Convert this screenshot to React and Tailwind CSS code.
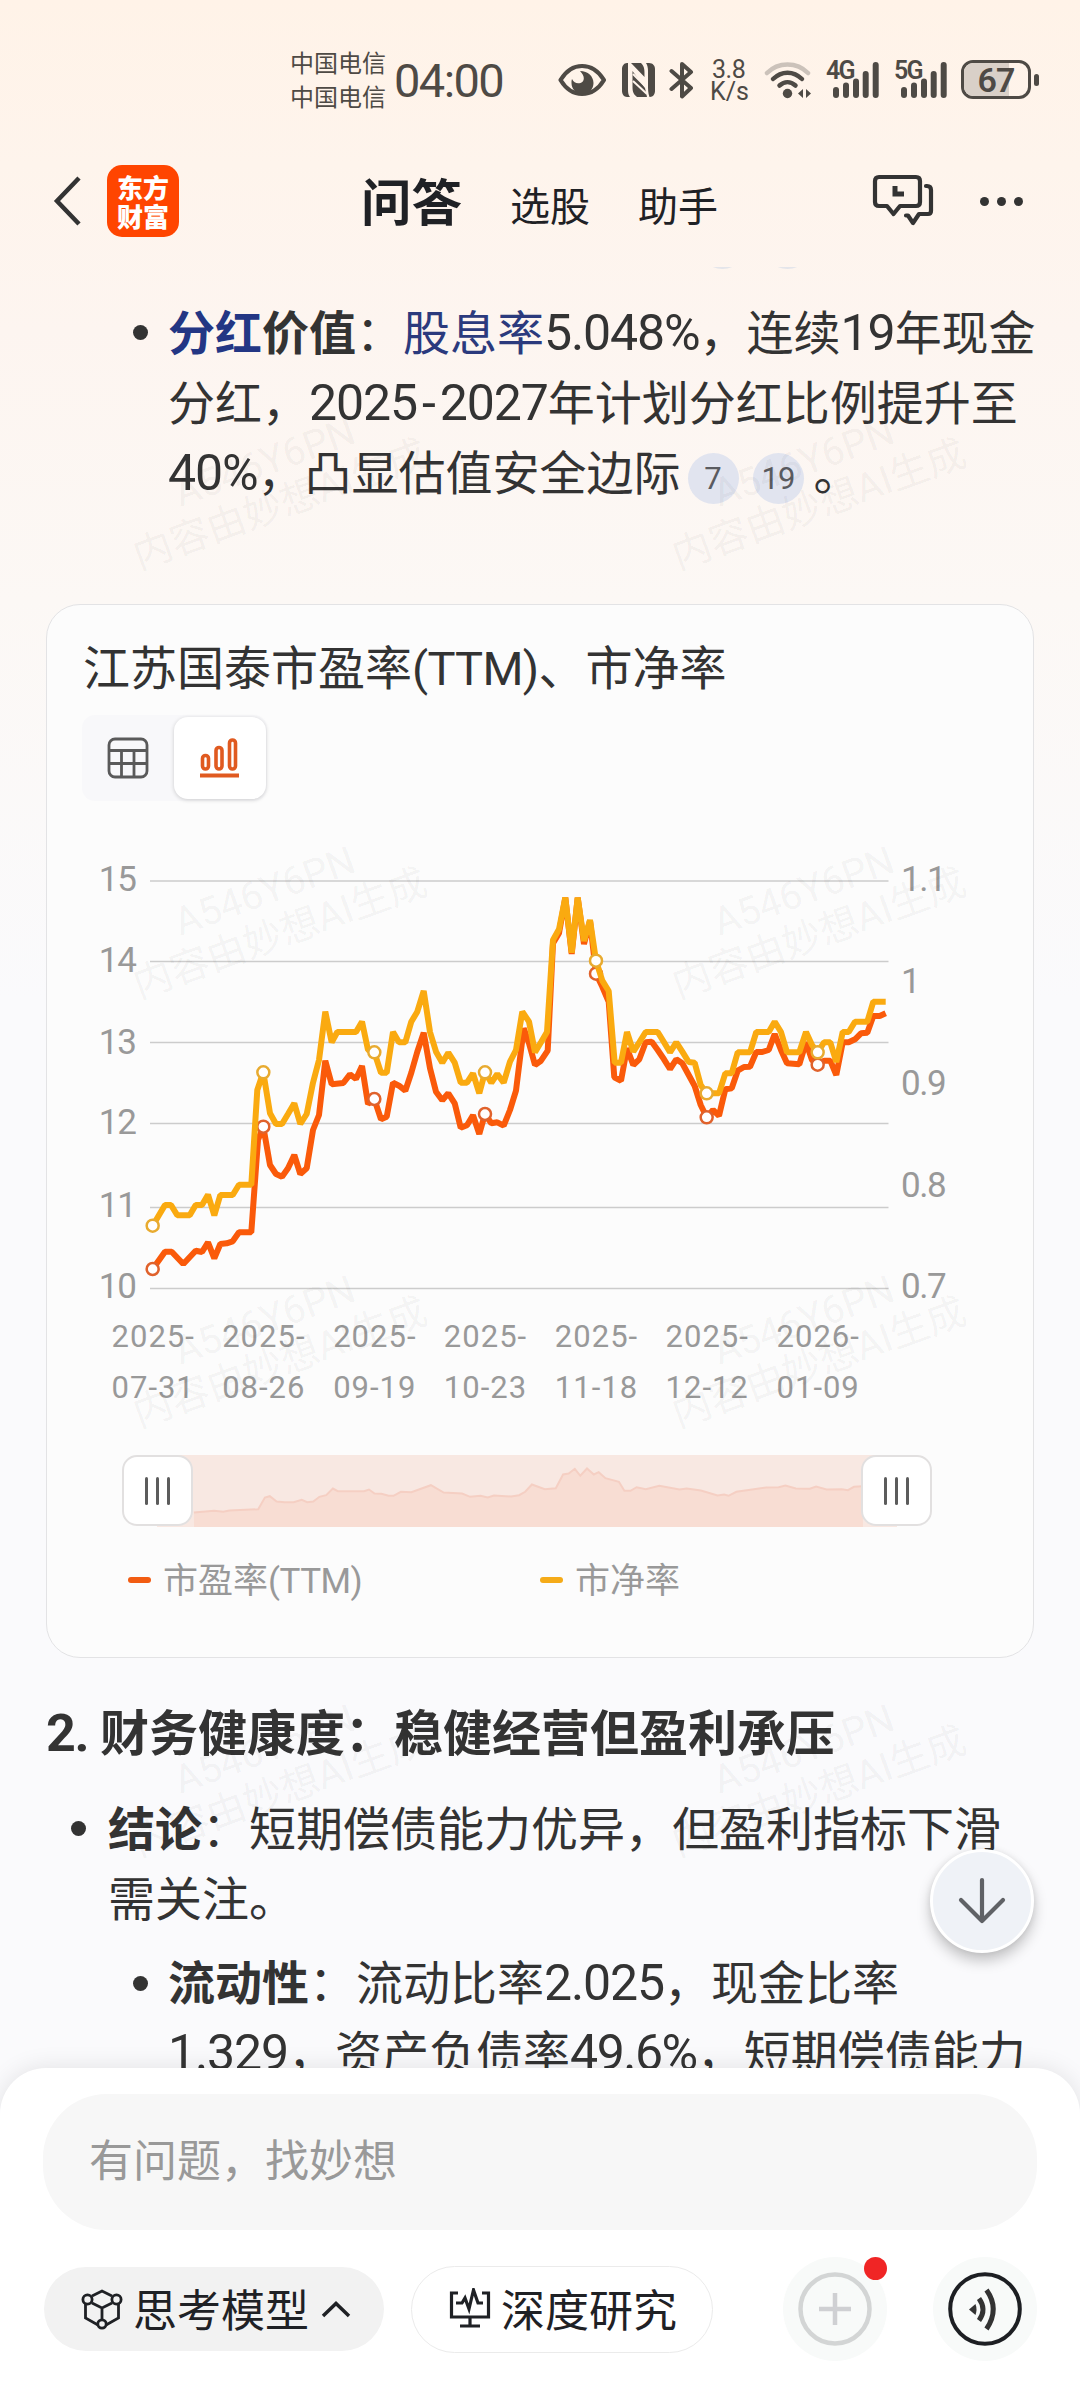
import React from "react";

const PE = [
  [218, 1317], [255, 1265], [275, 1265], [310, 1302], [347, 1262], [366, 1266], [384, 1237], [403, 1285], [421, 1242], [440, 1240], [458, 1234], [477, 1207], [514, 1207], [534, 930], [550, 890], [570, 1005], [588, 1032], [606, 1040], [624, 1015], [643, 975], [661, 1032], [680, 1015], [699, 900], [717, 855], [736, 692], [755, 763], [790, 759], [810, 733], [828, 747], [846, 708], [864, 822], [883, 807], [903, 868], [920, 860], [939, 758], [957, 767], [976, 782], [994, 728], [1012, 665], [1031, 608], [1050, 715], [1068, 785], [1087, 811], [1105, 790], [1124, 820], [1142, 893], [1161, 886], [1179, 856], [1198, 912], [1215, 852],
  [1234, 880], [1252, 877], [1271, 887], [1290, 840], [1308, 782], [1331, 595], [1347, 640], [1365, 705], [1383, 692], [1403, 662], [1419, 340], [1437, 310], [1456, 203], [1475, 372], [1493, 203], [1512, 342], [1530, 272], [1548, 431], [1567, 470], [1586, 515], [1603, 742], [1623, 752], [1641, 655], [1660, 705], [1678, 688], [1697, 637], [1715, 635], [1733, 660], [1752, 688], [1770, 717], [1789, 688], [1807, 700], [1826, 735], [1844, 768], [1862, 825], [1880, 862], [1899, 840], [1917, 857], [1936, 778], [1955, 775], [1973, 722], [1992, 711], [2010, 710], [2029, 666], [2047, 666], [2066, 660], [2084, 612], [2103, 660], [2121, 700], [2158, 703], [2178, 637], [2196, 690], [2213, 704], [2232, 692], [2251, 692], [2269, 735], [2288, 637], [2306, 637], [2325, 628], [2343, 610], [2362, 608], [2380, 558], [2399, 558], [2417, 550],
];

const PB = [
  [218, 1187], [255, 1125], [273, 1125], [292, 1156], [329, 1156], [347, 1125], [366, 1125], [384, 1094], [403, 1156], [421, 1095], [458, 1095], [477, 1064], [514, 1064], [532, 780], [550, 727], [570, 850], [588, 882], [606, 882], [624, 852], [643, 820], [661, 882], [680, 852], [699, 758], [717, 690], [736, 545], [755, 637], [772, 606], [828, 606], [846, 575], [864, 660], [883, 667], [903, 728], [920, 728], [939, 606], [957, 637], [976, 637], [994, 575], [1012, 545], [1031, 483], [1050, 606], [1068, 665], [1087, 698], [1105, 668], [1124, 698], [1142, 758], [1161, 758], [1179, 730], [1198, 790], [1215, 727],
  [1234, 758], [1252, 732], [1271, 758], [1290, 695], [1308, 660], [1327, 545], [1347, 575], [1365, 667], [1383, 637], [1401, 606], [1419, 330], [1437, 298], [1456, 203], [1475, 368], [1493, 203], [1512, 333], [1530, 270], [1548, 392], [1567, 452], [1586, 483], [1604, 698], [1623, 698], [1641, 606], [1660, 665], [1678, 637], [1697, 606], [1733, 606], [1752, 637], [1770, 667], [1789, 637], [1807, 665], [1826, 696], [1844, 698], [1862, 765], [1880, 790], [1917, 790], [1936, 730], [1955, 730], [1973, 667], [2010, 667], [2029, 606], [2066, 606], [2084, 575], [2103, 606], [2121, 667], [2158, 667], [2178, 606], [2196, 645], [2213, 667], [2232, 637], [2251, 637], [2269, 696], [2288, 606], [2306, 606], [2325, 575], [2362, 575], [2380, 515], [2417, 515],
];

const PREVIEW = [
  [217, 697], [250, 692], [265, 695], [275, 691], [322, 687], [333, 652], [341, 648], [352, 664], [365, 666], [380, 666], [393, 659], [402, 666], [412, 664], [422, 650], [433, 645], [444, 625], [452, 633], [495, 633], [503, 628], [512, 640], [523, 641], [535, 647], [543, 647], [555, 635], [572, 636], [604, 615], [625, 637], [655, 640], [668, 650], [685, 647], [697, 652], [707, 646], [735, 649], [748, 645], [758, 635], [769, 613], [790, 627], [808, 624], [820, 583], [829, 580], [839, 566], [848, 587], [859, 565], [870, 583], [878, 576], [889, 594], [911, 605], [920, 632], [930, 632], [940, 621], [955, 627], [977, 617], [1010, 628], [1022, 625], [1045, 631], [1072, 646], [1083, 643], [1090, 647], [1103, 635], [1140, 625], [1152, 622], [1172, 621], [1183, 616], [1200, 625], [1223, 626], [1233, 619], [1250, 628], [1275, 627], [1285, 630], [1295, 620], [1309, 618],
];

// Chart space: svg origin is at (80, 830) of the page, three data units per pixel.
const toLine = (pts) => pts.map(([x, y]) => `${(x / 3).toFixed(1)},${(y / 3).toFixed(1)}`).join(" ");
const previewLine = PREVIEW.map(([x, y]) => `${(x / 1.633 - 96).toFixed(1)},${((y - 526) / 3).toFixed(1)}`).join(" ");

const MARK_X = [218, 550, 883, 1215, 1548, 1880, 2213];
const PE_MARK = [1317, 890, 807, 852, 431, 862, 704];
const PB_MARK = [1187, 727, 667, 727, 392, 790, 667];
const DATES = [["2025-", "07-31"], ["2025-", "08-26"], ["2025-", "09-19"], ["2025-", "10-23"], ["2025-", "11-18"], ["2025-", "12-12"], ["2026-", "01-09"]];
const GRID = [51, 131.500, 212.500, 293.500, 377.500, 458.500];
const LEFT = [["15", 49], ["14", 129.5], ["13", 211.5], ["12", 292], ["11", 374.5], ["10", 456]];
const RIGHT = [["1.1", 49], ["1", 150.5], ["0.9", 253], ["0.8", 354.5], ["0.7", 456]];

const Num = ({ children, className = "" }) => (
  <span className={`text-[50px] leading-none tracking-[-1.1px] ${className}`}>{children}</span>
);

const Line = ({ children, className = "" }) => (
  <div className={`h-[70px] whitespace-nowrap text-[47px] leading-[74px] ${className}`}>{children}</div>
);

const Dot = ({ className = "" }) => <span className={`block size-[15px] shrink-0 rounded-full bg-[#333] ${className}`} />;

function Signal({ label }) {
  return (
    <div className="relative h-[38px] w-[54px]">
      <span className="absolute left-0 top-0 text-[25px] font-semibold leading-[20px] tracking-[-1.8px]">{label}</span>
      <svg className="block" width="54" height="38" viewBox="0 0 54 38" fill="currentColor">
        <rect x="7" y="26" width="6" height="11" rx="3" />
        <rect x="17" y="21.500" width="6" height="15.500" rx="3" />
        <rect x="27" y="17.500" width="6" height="19.500" rx="3" />
        <rect x="36.700" y="10" width="6" height="27" rx="3" />
        <rect x="46.700" y="1" width="6" height="36" rx="3" />
      </svg>
    </div>
  );
}

function StatusBar() {
  return (
    <div className="flex h-[156px] items-start text-[#4e4a45]">
      <div className="ml-[290px] mt-[47px] w-[104px] whitespace-nowrap text-[24px] leading-[34px]">
        <div>中国电信</div>
        <div>中国电信</div>
      </div>
      <div className="mt-[57px] w-[164px] text-[47px] font-[450] leading-[48px] tracking-[-1.6px]">04:00</div>
      <svg className="mt-[63px]" width="49" height="34" viewBox="0 0 49 34" fill="none">
        <path d="M2.500 17C8 8 15.500 3 24 3s16.500 5 22 14C40.500 26 32.500 31 24 31S8 26 2.500 17Z" stroke="currentColor" strokeWidth="4.200" strokeLinejoin="round" />
        <path d="M22 8c8 0 13.500 5.500 13.500 12 0 6.500-5 11-11 11-6.500 0-11-5-11-11 0-1.500 0-2.500.5-4 2 4 5 5 8.500 4 4.500-1.500 4.500-7-.5-12Z" fill="currentColor" />
      </svg>
      <svg className="ml-[15px] mt-[63px]" width="33" height="34" viewBox="0 0 33 34">
        <path fill="currentColor" d="M6 0H5C2 0 0 3 0 6v22c0 3 2 6 5 6h3C6.500 32 6 30 6 27ZM9 0h10c4 4 3.500 8 3.500 14ZM10.500 8 23 25l2 9H15c-4-3-4.500-6-4.500-11ZM24 0h3c4 0 6 3 6 6v22c0 3-2 6-5 6h-.5C26 30 26 26 26 22V8c0-3-.5-6-2-8Z" />
        <path d="M11 11 24 24M11 18 25 31" stroke="#fef3ea" strokeWidth="2" />
      </svg>
      <svg className="ml-[14px] mt-[61px]" width="25" height="38" viewBox="0 0 25 38" fill="none" stroke="currentColor" strokeWidth="4" strokeLinejoin="round" strokeLinecap="round">
        <path d="M2.500 10 22 27l-9 8.500V3l9 8L2.500 28" />
      </svg>
      <div className="ml-[16px] mt-[59px] w-[54px] text-[25px] leading-[22px]">
        <div className="pl-[2px] tracking-[-0.5px]">3.8</div>
        <div>K/s</div>
      </div>
      <svg className="mt-[61px]" width="48" height="38" viewBox="0 0 48 38" fill="none" strokeLinecap="round" strokeWidth="4.500">
        <path d="M3 12C14 .5 33 .5 44 12" stroke="#cbc2ba" />
        <path d="M9 18c8.500-8.500 20.500-8.500 29 0M15.500 24.500c5-4.500 11-4.500 16 0" stroke="currentColor" />
        <circle cx="23.500" cy="32.500" r="4.700" fill="currentColor" />
        <path d="M34 32.500 39 28v9ZM47 32.500 42 28v9Z" fill="currentColor" />
      </svg>
      <div className="ml-[14px] mt-[61px] flex gap-[14px]">
        <Signal label="4G" />
        <Signal label="5G" />
      </div>
      <div className="ml-[13px] mt-[60px] flex items-center">
        <div className="relative h-[39px] w-[70px] overflow-hidden rounded-[12px] border-[3px] border-[#4e4a45]">
          <div className="h-full w-[45px] bg-[#d9d0c8]" />
          <span className="absolute inset-0 text-center text-[34px] font-semibold leading-[34px] tracking-[-1px]">67</span>
        </div>
        <div className="ml-[3px] h-[12px] w-[5px] rounded-full bg-[#4e4a45]" />
      </div>
    </div>
  );
}

function NavBar() {
  return (
    <div className="flex h-[111px] items-start text-[#1f2125]">
      <svg className="ml-[52px] mt-[19px]" width="30" height="52" viewBox="0 0 30 52" fill="none" stroke="#333" strokeWidth="4.500">
        <path d="M27 3 5 26l22 23" />
      </svg>
      <div className="ml-[25px] mt-[9px] flex size-[72px] flex-col items-center justify-center rounded-[15px] bg-[#ff4500] font-['Noto_Sans_CJK_SC'] text-[26px] font-black leading-[29px] text-white">
        <span>东方</span>
        <span>财富</span>
      </div>
      <div className="ml-[182px] mt-[18px] w-[149px] whitespace-nowrap text-[50.500px] font-bold leading-[60px]">问答</div>
      <div className="mt-[22px] w-[128px] whitespace-nowrap text-[40px] leading-[60px]">选股</div>
      <div className="mt-[22px] w-[234px] whitespace-nowrap text-[40px] leading-[60px]">助手</div>
      <svg className="mt-[18px]" width="62" height="54" viewBox="0 0 62 54" fill="none" stroke="#333" strokeWidth="4.200" strokeLinecap="round" strokeLinejoin="round">
        <path d="M7 3h37q4 0 4 4v21q0 4-4 4H28l-6.500 8L15 32H7q-4 0-4-4V7q0-4 4-4Z" />
        <path d="M54 12h1q4 0 4 4v21q0 3-3 3h-9l-6 9-5-7.500h-2" />
        <path d="M23 12v8h9" strokeWidth="5" strokeLinecap="butt" strokeLinejoin="miter" />
      </svg>
      <div className="ml-[46px] mt-[41px] flex gap-[8px]">
        <span className="size-[9px] rounded-full bg-[#333]" />
        <span className="size-[9px] rounded-full bg-[#333]" />
        <span className="size-[9px] rounded-full bg-[#333]" />
      </div>
    </div>
  );
}

function Watermarks() {
  return (
    <div className="pointer-events-none absolute left-[3px] top-[2px] grid grid-cols-2 text-center text-[39px] leading-[45px] text-black/[0.05]">
      {[0, 1, 2, 3, 4, 5, 6, 7].map((i) => (
        <div key={i} className="flex h-[429px] w-[540px] items-center justify-center">
          <div className="-rotate-20 whitespace-nowrap">
            <div>A546Y6PN</div>
            <div>内容由妙想AI生成</div>
          </div>
        </div>
      ))}
    </div>
  );
}

function Chart() {
  return (
    <svg className="block" width="900" height="600" viewBox="0 0 900 600" fontFamily="Roboto" fill="none">
      {GRID.map((y) => (
        <line key={y} x1="70" x2="808.500" y1={y} y2={y} stroke="#ccc" strokeWidth="1.500" />
      ))}
      <g fontSize="35" fill="#999">
        {LEFT.map(([t, y]) => (
          <text key={t} x="56" y={y + 12} textAnchor="end" letterSpacing="-1">{t}</text>
        ))}
        {RIGHT.map(([t, y]) => (
          <text key={t} x="821" y={y + 12} letterSpacing="-1.500">{t}</text>
        ))}
      </g>
      <g fontSize="31" fill="#999" textAnchor="middle" letterSpacing="1">
        {DATES.map(([a, b], i) => (
          <g key={b}>
            <text x={MARK_X[i] / 3 + 0.5} y="517">{a}</text>
            <text x={MARK_X[i] / 3 + 0.5} y="568">{b}</text>
          </g>
        ))}
      </g>
      <polyline points={toLine(PE)} stroke="#fa5a0a" strokeWidth="6" strokeLinejoin="bevel" />
      {MARK_X.map((x, i) => (
        <circle key={x} cx={x / 3} cy={PE_MARK[i] / 3} r="6" fill="#fff" stroke="#e0622c" strokeWidth="2.500" />
      ))}
      <polyline points={toLine(PB)} stroke="#faaa10" strokeWidth="6" strokeLinejoin="bevel" />
      {MARK_X.map((x, i) => (
        <circle key={x} cx={x / 3} cy={PB_MARK[i] / 3} r="6" fill="#fff" stroke="#e8ab30" strokeWidth="2.500" />
      ))}
    </svg>
  );
}

const Handle = () => (
  <div className="z-10 flex h-[71px] w-[71px] items-center justify-center gap-[8px] rounded-[15px] border-2 border-[#e2e0e0] bg-white">
    <span className="h-[28px] w-[3px] rounded-full bg-[#5c5c5c]" />
    <span className="h-[28px] w-[3px] rounded-full bg-[#5c5c5c]" />
    <span className="h-[28px] w-[3px] rounded-full bg-[#5c5c5c]" />
  </div>
);

function Card() {
  return (
    <section className="ml-[46px] h-[1054px] w-[988px] rounded-[34px] border border-[#e3e3e5] bg-[#fcfcfc]">
      <h2 className="ml-[36px] mt-[32px] h-[60px] whitespace-nowrap text-[47px] leading-[64px] text-[#333]">江苏国泰市盈率<span className="tracking-[-0.7px]">(TTM)</span>、市净率</h2>
      <div className="ml-[35px] mt-[18px] flex h-[86px] w-[185px] items-center rounded-[13px] bg-[#f8f8fa]">
        <div className="flex h-[82px] w-[92px] items-center justify-center">
          <svg width="42" height="42" viewBox="0 0 42 42" fill="none" stroke="#5a5a5a" strokeWidth="2.800">
            <rect x="2" y="2" width="38" height="38" rx="6" />
            <path d="M2 13.500h38M2 26.500h38M14.500 13.500V40M27 13.500V40" />
          </svg>
        </div>
        <div className="flex h-[82px] w-[92px] items-center justify-center rounded-[14px] bg-white shadow-[0_1px_4px_rgba(0,0,0,0.18)]">
          <svg width="42" height="42" viewBox="0 0 42 42" fill="none" stroke="#e05a20" strokeWidth="3.600">
            <rect x="3.500" y="18.500" width="6" height="13.500" rx="3" />
            <rect x="17" y="10.500" width="6" height="21.500" rx="3" />
            <rect x="30.500" y="3" width="6" height="29" rx="3" />
            <path d="M1 38.500h39" strokeWidth="3.800" />
          </svg>
        </div>
      </div>
      <div className="ml-[33px] mt-[29px]">
        <Chart />
      </div>
      <div className="ml-[75px] mt-[25px] flex h-[71px] items-center">
        <Handle />
        <div className="-mx-[36px] h-[72px] w-[740px] bg-[#f8e8e2]">
          <svg className="block" width="740" height="72" viewBox="0 -0.500 740 72">
            <polygon points={`${previewLine},706,71.500 37,71.500`} fill="#f8ddd3" />
            <polyline points={previewLine} fill="none" stroke="#f5cfc3" strokeWidth="2" />
          </svg>
        </div>
        <Handle />
      </div>
      <div className="ml-[81px] mt-[33px] flex h-[42px] items-center whitespace-nowrap text-[35px] leading-[42px] text-[#999]">
        <span className="h-[6px] w-[23px] rounded-full bg-[#f25c12]" />
        <span className="ml-[12px] w-[377px] pt-[3px]">市盈率<span className="tracking-[-0.5px]">(TTM)</span></span>
        <span className="h-[6px] w-[23px] rounded-full bg-[#f5ab18]" />
        <span className="ml-[12px] pt-[3px]">市净率</span>
      </div>
    </section>
  );
}

function Content() {
  return (
    <main className="relative h-[1845px] overflow-hidden text-[#333]">
      <div className="absolute left-[697px] top-[-49px] flex gap-[14px]">
        <span className="size-[51px] rounded-full bg-[#e4e5ea]" />
        <span className="size-[51px] rounded-full bg-[#e4e5ea]" />
      </div>
      <div className="flex h-[337px] pt-[30px]">
        <Dot className="ml-[133px] mr-[20px] mt-[28px]" />
        <div>
          <Line>
            <b><span className="text-[#233684]">分红</span>价值</b>：<span className="text-[#2b3a7d]">股息率</span><Num>5.048%</Num>，连续<Num>19</Num>年现金
          </Line>
          <Line>
            分红，<Num>2025<span className="mx-[5px]">-</span>2027</Num>年计划分红比例提升至
          </Line>
          <div className="flex">
            <Line><Num>40%</Num>，凸显估值安全边际</Line>
            <div className="ml-[7px] mt-[16px] flex gap-[14px] text-[31px] leading-[51px] text-[#5a5b60]">
              <span className="size-[51px] rounded-full bg-[#e1e4ef] text-center">7</span>
              <span className="size-[51px] rounded-full bg-[#e1e4ef] text-center tracking-[-1px]">19</span>
            </div>
            <Line className="ml-[10px]">。</Line>
          </div>
        </div>
      </div>
      <Card />
      <h3 className="ml-[46px] mt-[40px] h-[70px] whitespace-nowrap text-[49px] font-bold leading-[74px]"><span className="text-[52px] leading-none tracking-[-1.3px]">2. </span>财务健康度：稳健经营但盈利承压</h3>
      <div className="mt-[26px] flex">
        <Dot className="ml-[71px] mr-[22px] mt-[27px]" />
        <div className="-mt-[1px]">
          <Line>
            <b>结论</b>：短期偿债能力优异，但盈利指标下滑
          </Line>
          <Line>需关注。</Line>
        </div>
      </div>
      <div className="mt-[14px] flex">
        <Dot className="ml-[133px] mr-[20px] mt-[29px]" />
        <div>
          <Line><b>流动性</b>：流动比率<Num>2.025</Num>，现金比率</Line>
          <Line><Num>1.329</Num>，资产负债率<Num className="tracking-[-1.5px]">49.6%</Num>，短期偿债能力</Line>
        </div>
      </div>
      <Watermarks />
      <button className="absolute left-[930px] top-[1582px] flex size-[104px] items-center justify-center rounded-full border-[3px] border-white bg-[#eff2f7] shadow-[0_8px_14px_rgba(0,0,0,0.22),0_0_6px_rgba(0,0,0,0.08)]">
        <svg width="50" height="48" viewBox="0 0 50 48" fill="none" stroke="#606266" strokeWidth="4.200" strokeLinecap="round" strokeLinejoin="round">
          <path d="M25 3v41M4 23l21 21 21-21" />
        </svg>
      </button>
    </main>
  );
}

function Footer() {
  return (
    <footer className="relative z-10 -mt-[44px] h-[332px] rounded-t-[46px] bg-white pt-[26px] text-[#1f2125] shadow-[0_0_24px_rgba(0,0,0,0.1)]">
      <div className="ml-[43px] h-[136px] w-[994px] rounded-[64px] bg-[#f7f7f7] pl-[46px] text-[44px] leading-[137px] text-[#999]">有问题，找妙想</div>
      <div className="mt-[27px] flex h-[104px] items-center whitespace-nowrap text-[44px]">
        <div className="ml-[44px] flex h-[84px] w-[340px] items-center rounded-full bg-[#f2f2f2] pl-[37px]">
          <svg width="42" height="42" viewBox="0 0 42 42" fill="none" stroke="#1f2125" strokeWidth="2.800">
            <path d="M11 8 21 3l10 5M4.500 16v14L17 37M37.500 16v14L25 37M11 15l10 5 10-5M21 20v12" />
            <circle cx="6.500" cy="11.500" r="4.600" />
            <circle cx="35.500" cy="11.500" r="4.600" />
            <circle cx="21" cy="36" r="4.200" />
          </svg>
          <span className="ml-[10px] pt-[5px] leading-[60px]">思考模型</span>
          <svg className="ml-[12px]" width="30" height="18" viewBox="0 0 30 18" fill="none" stroke="#1f2125" strokeWidth="3.500">
            <path d="m2 16 13-12.500L28 16" />
          </svg>
        </div>
        <div className="ml-[27px] flex h-[87px] w-[302px] items-center rounded-full border border-[#ebebeb] bg-white pl-[37px]">
          <svg width="42" height="42" viewBox="0 0 42 42" fill="none" stroke="#1f2125" strokeWidth="3.200">
            <path d="M9 5H2.500v24h37V5H33M21 29v8M11 38h20M7 15h6l3-5 4 11 4.500-19L29 15h5" />
          </svg>
          <span className="ml-[10px] pt-[5px] leading-[60px]">深度研究</span>
        </div>
        <div className="relative ml-[70px] size-[104px] rounded-full bg-[#f8faf9]">
          <svg width="104" height="104" viewBox="0 0 104 104" fill="none" stroke="#d3d5d5" strokeWidth="4.500">
            <circle cx="52" cy="52" r="34.500" />
            <path d="M52 36v32M36 52h32" stroke="#cfd0d3" />
          </svg>
          <span className="absolute right-0 top-0 size-[23px] rounded-full bg-[#f02525]" />
        </div>
        <div className="ml-[46px] size-[104px] rounded-full bg-[#f8faf9]">
          <svg width="104" height="104" viewBox="0 0 104 104" fill="none" stroke="#333" strokeWidth="5">
            <circle cx="52" cy="52" r="34.800" stroke="#1d1f23" strokeWidth="4" />
            <path d="M36 52.500 42.500 47q2 5.500 0 11Z" fill="#333" stroke="none" />
            <path d="M46 41.500q8 11 0 22M53.500 33q13.500 19 0 39" />
          </svg>
        </div>
      </div>
    </footer>
  );
}

export default function App() {
  return (
    <div lang="zh-CN" className="h-[2400px] w-[1080px] overflow-hidden bg-[linear-gradient(180deg,#fff3e8_0px,#fdf5f0_330px,#fcf8f5_600px,#fafafc_1000px,#fafafc_2100px)] font-['Roboto','Noto_Sans_CJK_SC',sans-serif]">
      <StatusBar />
      <NavBar />
      <Content />
      <Footer />
    </div>
  );
}
